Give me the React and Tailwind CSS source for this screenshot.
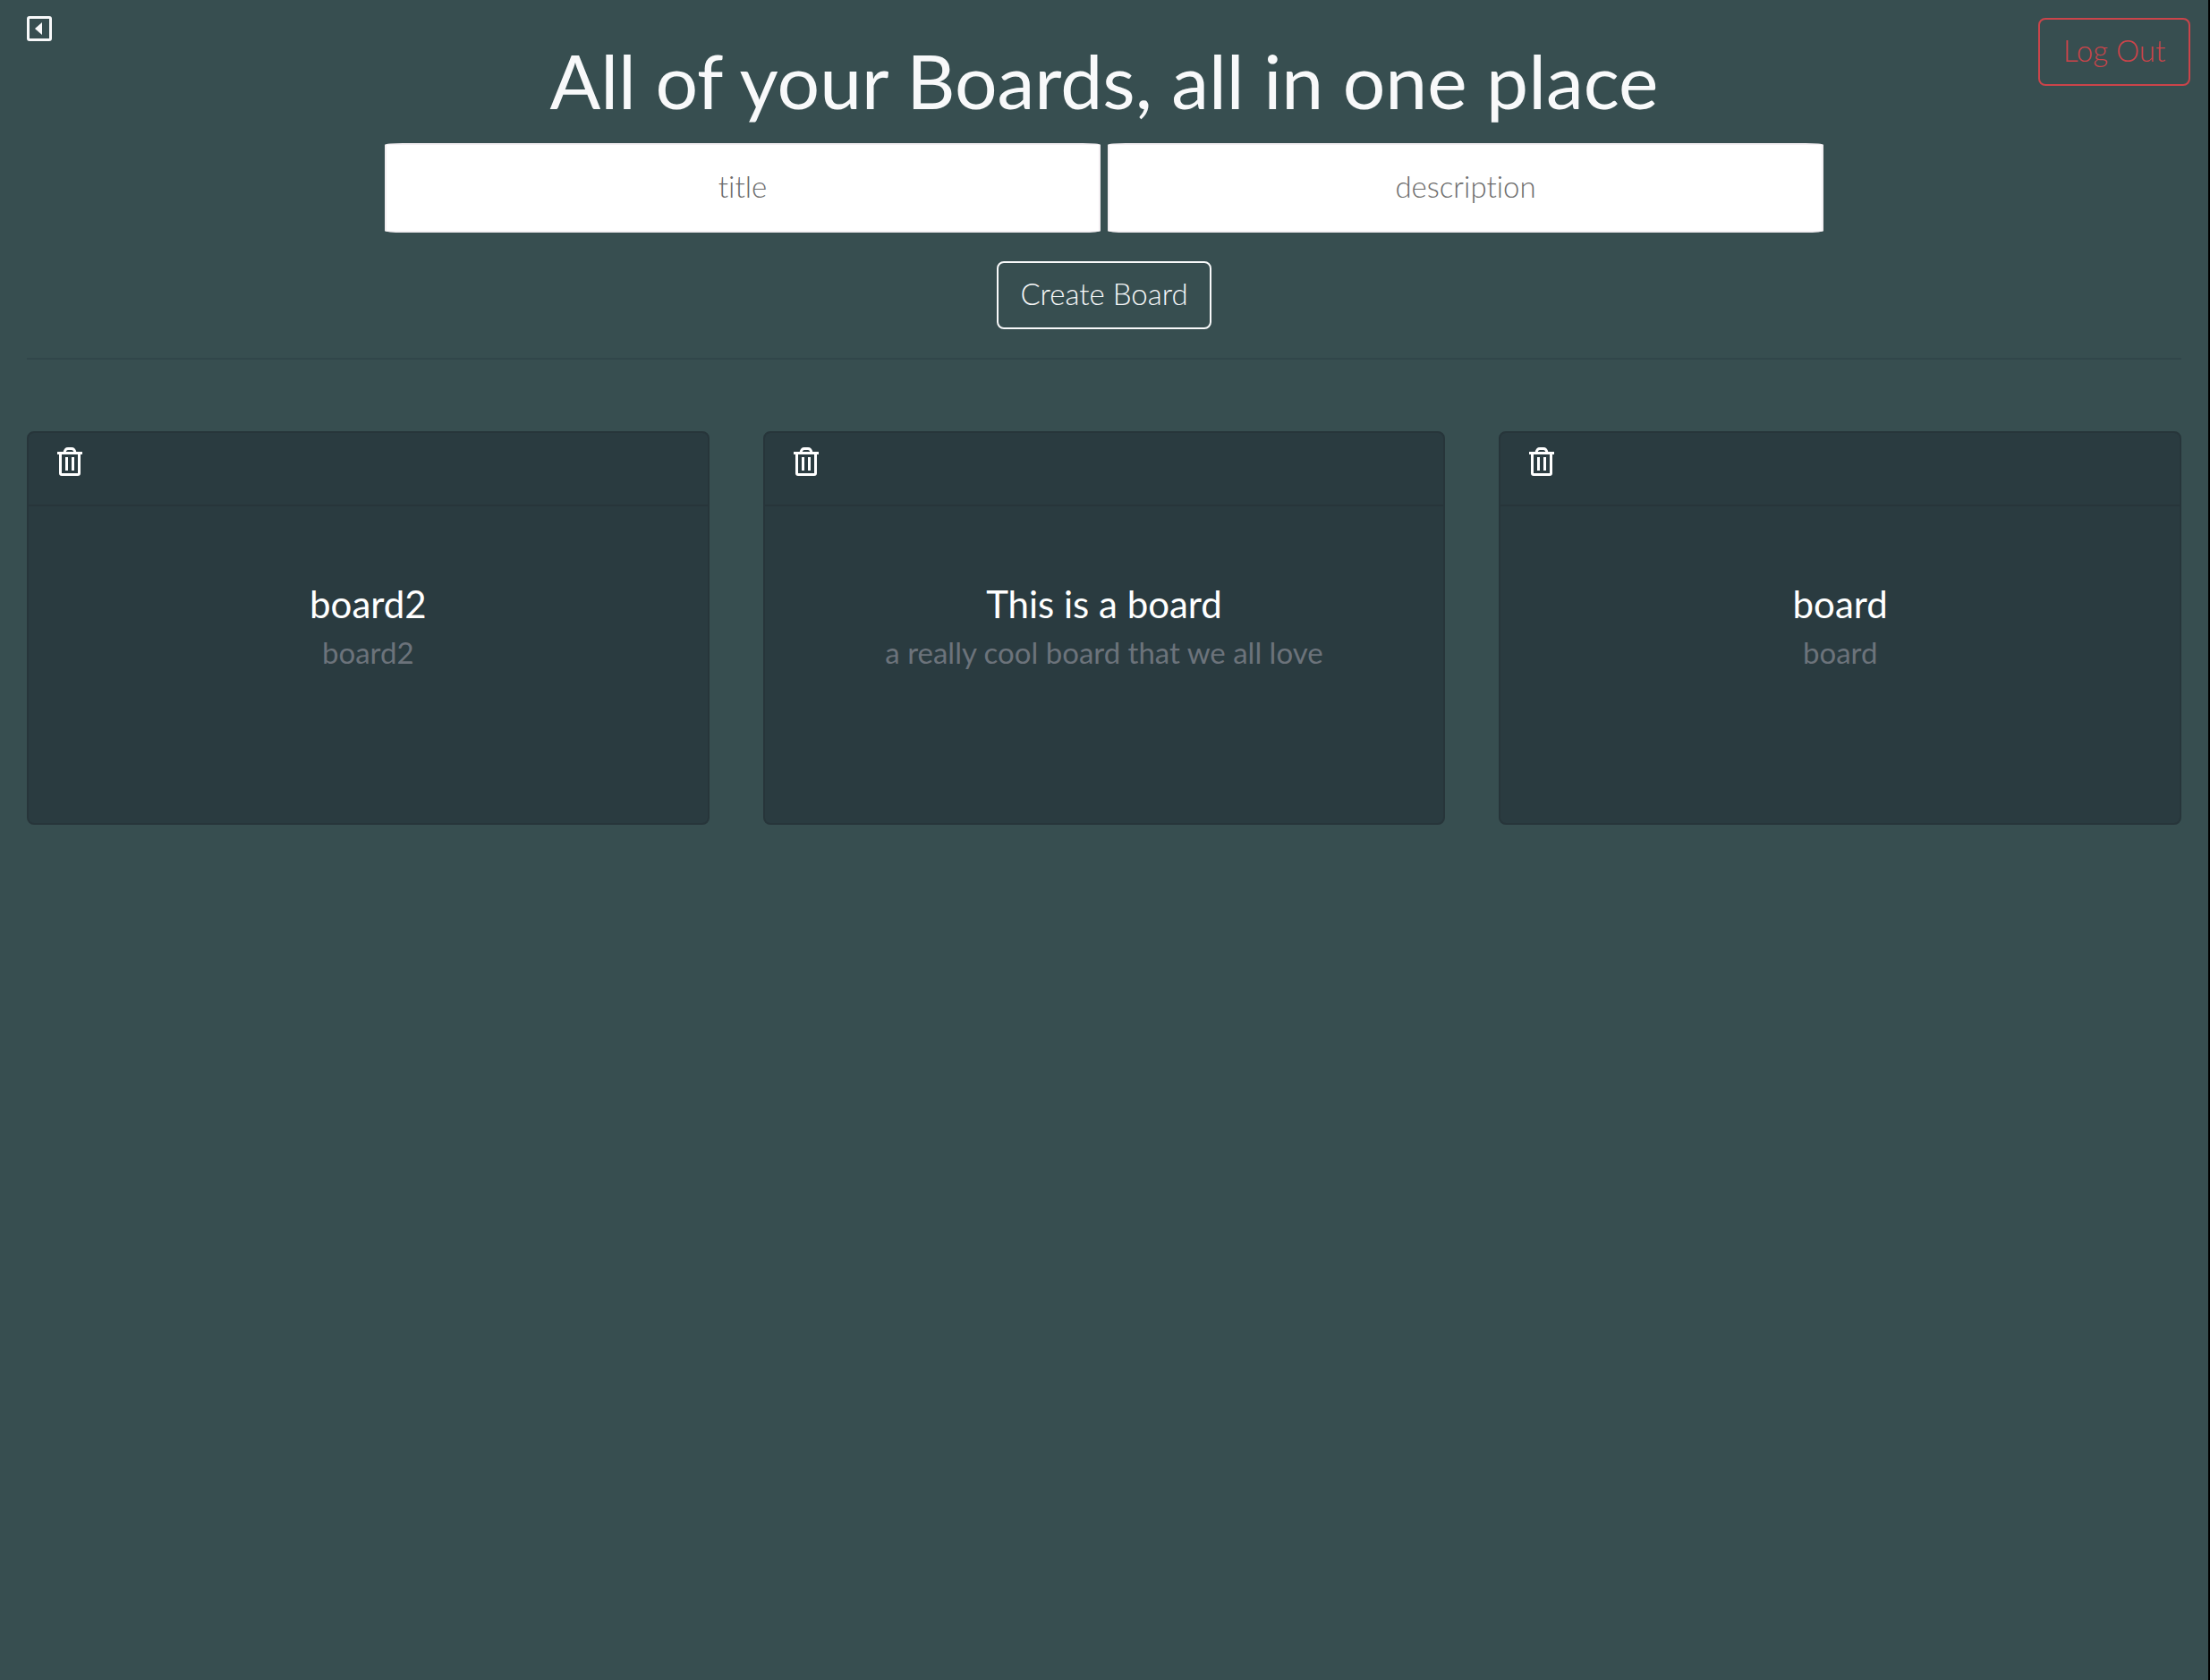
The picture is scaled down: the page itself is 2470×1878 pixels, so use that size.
const boards = [
  { title: "board2", description: "board2" },
  { title: "This is a board", description: "a really cool board that we all love" },
  { title: "board", description: "board" },
];

function CollapseIcon() {
  return (
    <svg width="28" height="28" viewBox="0 0 28 28" fill="none" aria-hidden="true">
      <rect x="1.5" y="1.5" width="25" height="25" rx="1.5" stroke="currentColor" strokeWidth="3" />
      <path d="M17 7v14l-8-7z" fill="currentColor" />
    </svg>
  );
}

function TrashIcon() {
  return (
    <svg width="28" height="32" viewBox="0 0 28 32" fill="none" stroke="currentColor" strokeWidth="3" aria-hidden="true">
      <path d="M0 6.5h28" />
      <path d="M8 6C8.5 3 10 1.5 12 1.5h4c2 0 3.5 1.5 4 4.5" />
      <path d="M3.5 6.5V29A1.5 1.5 0 0 0 5 30.5h18a1.5 1.5 0 0 0 1.5-1.5V6.5" />
      <path d="M10.5 11v15M17.5 11v15" />
    </svg>
  );
}

function Field({ name }) {
  return (
    <input
      type="text"
      aria-label={name}
      placeholder={name}
      className="h-[100px] w-[800px] min-w-0 rounded-[20px/2px] border-2 border-[#f3eff2] bg-white pb-1 text-center text-[33px] font-light text-[#374e50] placeholder:text-[#6c6c6c]"
    />
  );
}

function BoardCard({ title, description }) {
  return (
    <article className="min-w-0 flex-1 overflow-hidden rounded-lg border-2 border-[#27353a] bg-[#2a3b40]">
      <header className="h-[82px] border-b-2 border-[#27353a] px-8 pt-4">
        <button type="button" aria-label={"Delete " + title} className="block text-white">
          <TrashIcon />
        </button>
      </header>
      <div className="h-[354px] pt-[85px] text-center">
        <h2 className="text-[42px] leading-[48px] text-white">{title}</h2>
        <p className="mt-1.5 text-[33px] leading-[48px] text-[#6c737b]">{description}</p>
      </div>
    </article>
  );
}

export default function App() {
  return (
    <div className="min-h-screen border-r-2 border-black bg-[#374e50] px-[30px] font-['Avenir','Lato',sans-serif] text-[#f8f9fa] [font-variant-ligatures:none]">
      <button type="button" aria-label="Back" className="absolute top-[18px] left-[30px]">
        <CollapseIcon />
      </button>
      <button
        type="button"
        className="absolute top-5 right-[22px] h-[76px] w-[170px] rounded-lg border-2 border-[#cb444a] pb-0.5 text-[33px] font-light text-[#cb444a]"
      >
        Log Out
      </button>
      <main>
        <h1 className="pt-[42px] text-center text-[84px] leading-[96px]">All of your Boards, all in one place</h1>
        <form className="mt-[22px] flex flex-col items-center gap-8" onSubmit={(e) => e.preventDefault()}>
          <div className="flex gap-2">
            <Field name="title" />
            <Field name="description" />
          </div>
          <button type="submit" className="h-[76px] w-[240px] rounded-lg border-2 border-[#f8f9fa] pb-0.5 text-[33px] font-light">
            Create Board
          </button>
        </form>
        <hr className="mt-8 border-t-2 border-[#31464a]" />
        <section aria-label="Boards" className="mt-20 flex gap-[60px]">
          {boards.map((board) => (
            <BoardCard key={board.title} {...board} />
          ))}
        </section>
      </main>
    </div>
  );
}
